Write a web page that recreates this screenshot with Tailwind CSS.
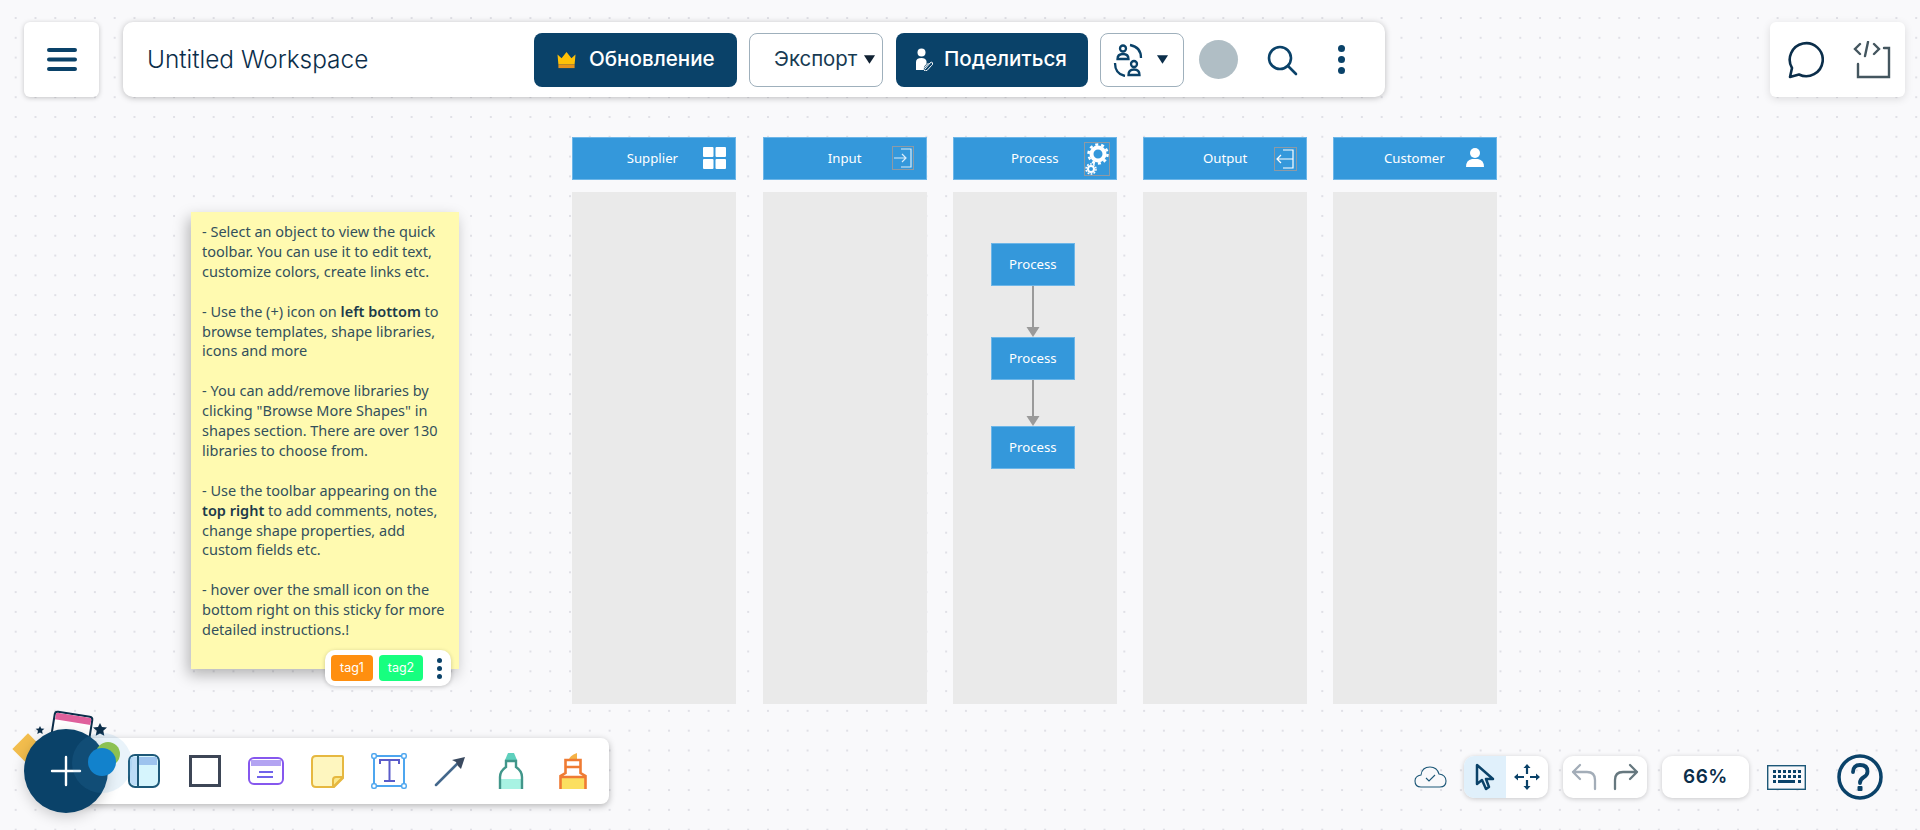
<!DOCTYPE html>
<html lang="ru">

<head>
    <meta charset="UTF-8">
    <meta name="viewport" content="width=device-width, initial-scale=1.0">
    <title>Untitled Workspace</title>
    <script src="https://cdn.jsdelivr.net/npm/@tailwindcss/browser@4"></script>
</head>

<body class="bg-[#f9f9fb]">
    <div class="relative w-[1920px] h-[830px] overflow-hidden pt-[22px] font-['Inter',sans-serif] bg-[#f9f9fb] bg-[radial-gradient(circle,#e0e0e6_1px,transparent_1.3px)] bg-[size:19.8px_19.8px] bg-[position:5.8px_8.1px]">

        <!-- top bar -->
        <div class="flex h-[75px] pl-[24px] pr-[15px]">
            <div class="w-[75px] h-[75px] bg-white rounded-[6px] shadow-[0_1px_5px_rgba(0,0,0,0.22)] flex items-center justify-center">
                <svg width="30" height="27" viewBox="0 0 30 27" fill="none" stroke="#0a4269" stroke-width="4" stroke-linecap="round"><path d="M2 4h26M2 13.500h26M2 23h26" /></svg>
            </div>
            <div class="ml-[24px] w-[1262px] h-[75px] bg-white rounded-[10px] shadow-[0_1px_6px_rgba(0,0,0,0.25)] flex items-center pl-[24px]">
                <div class="w-[387px] text-[24.400px] font-light text-[#0b2e4a] whitespace-nowrap">Untitled Workspace</div>
                <div class="w-[203px] h-[54px] rounded-[8px] bg-[#0a4269] flex items-center text-white text-[20.600px] font-medium pl-[22px]">
                    <svg width="21" height="18" viewBox="0 0 22 20" class="mr-[12px]">
                        <path d="M1 4l4.500 4L11 1l5.500 7L21 4l-1 11H2z" fill="#ffc107" />
                        <rect x="2" y="15" width="18" height="4" fill="#e8921a" />
                    </svg>
                    Обновление
                </div>
                <div class="ml-[12px] w-[134px] h-[54px] rounded-[8px] border border-[#9fb0bc] bg-white flex items-center text-[20.400px] text-[#173a52] pl-[24px]">
                    Экспорт
                    <svg width="13" height="9" viewBox="0 0 14 9" class="ml-[6px]"><path d="M1 0h12L7 9z" fill="#123" /></svg>
                </div>
                <div class="ml-[13px] w-[192px] h-[54px] rounded-[8px] bg-[#0a4269] flex items-center text-white text-[20.600px] font-medium pl-[19px]">
                    <svg width="18" height="23" viewBox="0 0 18 23" class="mr-[11px]" fill="#fff">
                        <circle cx="6.500" cy="4.500" r="4" />
                        <path d="M1 22v-8q0-4 5.500-4 4 0 5 3v3q-3 2-3 6z" />
                        <path d="M10 21l5-6q2-2 2.500 0t-1 2.500l-4.500 5q-2 1-3-.5t.5-2.500l4-4.500" fill="none" stroke="#fff" stroke-width="1" />
                    </svg>
                    Поделиться
                </div>
                <div class="ml-[12px] w-[84px] h-[54px] rounded-[8px] border border-[#9fb0bc] bg-white flex items-center pl-[12px]">
                    <svg width="30" height="34" viewBox="0 0 30 34" fill="none" stroke="#0a4269" stroke-width="2.300">
                        <circle cx="10" cy="5.500" r="3" />
                        <path d="M4.500 16q0-5 5.500-5t5.500 5z" />
                        <circle cx="21" cy="21" r="3" />
                        <path d="M15.500 32q0-5.500 5.500-5.500t5.500 5.500z" />
                        <path d="M17 2q11 2 11 13M2 20q0 11 10 13" />
                    </svg>
                    <svg width="13" height="9" viewBox="0 0 14 9" class="ml-[13px]"><path d="M1 0h12L7 9z" fill="#0b2e4a" /></svg>
                </div>
                <div class="ml-[15px] w-[39px] h-[39px] rounded-full bg-[#b0bec5]"></div>
                <svg width="32" height="32" viewBox="0 0 32 32" class="ml-[28px]" fill="none" stroke="#0a4269" stroke-width="2.600" stroke-linecap="round">
                    <circle cx="14" cy="14" r="11" />
                    <path d="M22 22l8 8" />
                </svg>
                <div class="ml-[40px] flex flex-col gap-[4px]">
                    <div class="w-[7px] h-[7px] rounded-full bg-[#0a4269]"></div>
                    <div class="w-[7px] h-[7px] rounded-full bg-[#0a4269]"></div>
                    <div class="w-[7px] h-[7px] rounded-full bg-[#0a4269]"></div>
                </div>
            </div>
            <div class="ml-auto w-[135px] h-[75px] bg-white rounded-[6px] shadow-[0_2px_8px_rgba(0,0,0,0.12)] flex items-center pl-[16px]">
                <svg width="38" height="38" viewBox="0 0 38 38" fill="none" stroke="#0b2e4a" stroke-width="2.600" stroke-linejoin="round">
                    <path d="M4 36l2-9A16.500 16.500 0 1 1 13 33.500z" />
                </svg>
                <svg width="38" height="38" viewBox="0 0 38 38" class="ml-[29px]" fill="none" stroke="#44565f" stroke-width="2.400" stroke-linecap="round">
                    <path d="M7 3l-5 5 5 5M21 3l5 5-5 5M15 1l-3 14" />
                    <path d="M31 7h5v29H5V23" />
                </svg>
            </div>
        </div>

        <!-- canvas -->
        <div class="flex items-start h-[607px] pt-[40px] pl-[191px]">
            <div class="relative w-[268px] h-[457px] mt-[75px] bg-[#fffab0] shadow-[-3px_6px_14px_rgba(0,0,0,0.28)] pt-[10px] pl-[11px] font-['Noto_Sans',sans-serif] text-[14.500px] leading-[19.900px] text-[#33505c] whitespace-nowrap">
                <div>- Select an object to view the quick</div>
                <div>toolbar. You can use it to edit text,</div>
                <div>customize colors, create links etc.</div>
                <div class="h-[19.900px]"></div>
                <div>- Use the (+) icon on <b class="font-semibold text-[#1c3a4a]">left bottom</b> to</div>
                <div>browse templates, shape libraries,</div>
                <div>icons and more</div>
                <div class="h-[19.900px]"></div>
                <div>- You can add/remove libraries by</div>
                <div>clicking "Browse More Shapes" in</div>
                <div>shapes section. There are over 130</div>
                <div>libraries to choose from.</div>
                <div class="h-[19.900px]"></div>
                <div>- Use the toolbar appearing on the</div>
                <div><b class="font-semibold text-[#1c3a4a]">top right</b> to add comments, notes,</div>
                <div>change shape properties, add</div>
                <div>custom fields etc.</div>
                <div class="h-[19.900px]"></div>
                <div>- hover over the small icon on the</div>
                <div>bottom right on this sticky for more</div>
                <div>detailed instructions.!</div>

                <div class="absolute left-[134px] top-[438px] w-[126px] h-[36px] bg-white rounded-[10px] shadow-[0_1px_4px_rgba(0,0,0,0.2)] flex items-center pl-[6px] font-['Inter',sans-serif] text-[12.500px] text-white">
                    <div class="w-[42px] h-[26px] rounded-[4px] bg-[#ff8f0f] flex items-center justify-center">tag1</div>
                    <div class="ml-[6px] w-[44px] h-[26px] rounded-[4px] bg-[#17ff7f] flex items-center justify-center">tag2</div>
                    <div class="ml-[14px] flex flex-col gap-[3px]">
                        <div class="w-[5px] h-[5px] rounded-full bg-[#0a4269]"></div>
                        <div class="w-[5px] h-[5px] rounded-full bg-[#0a4269]"></div>
                        <div class="w-[5px] h-[5px] rounded-full bg-[#0a4269]"></div>
                    </div>
                </div>
            </div>

            <div class="ml-[113.400px] flex gap-[26.250px] font-['Noto_Sans',sans-serif] text-[13.200px] text-white">
                <div class="w-[164px]">
                    <div class="relative h-[43px] bg-[#3498db] border border-[#6db6e8] flex items-center justify-center pr-[4px]">
                        Supplier
                        <svg width="23" height="22" viewBox="0 0 23 22" class="absolute left-[130px] top-[9px]" fill="#fff">
                            <rect x="0" y="0" width="10.500" height="10" rx="1" />
                            <rect x="12.500" y="0" width="10.500" height="10" rx="1" />
                            <rect x="0" y="12" width="10.500" height="10" rx="1" />
                            <rect x="12.500" y="12" width="10.500" height="10" rx="1" />
                        </svg>
                    </div>
                    <div class="mt-[12px] h-[512px] bg-[#eaeaea]"></div>
                </div>
                <div class="w-[164px]">
                    <div class="relative h-[43px] bg-[#3498db] border border-[#6db6e8] flex items-center justify-center">
                        Input
                        <svg width="22" height="24" viewBox="0 0 22 24" class="absolute left-[128px] top-[8px]" fill="none">
                            <rect x="0.500" y="0.500" width="21" height="23" stroke="#8d9aa5" />
                            <path d="M9 3h10v18H9M2 12h12M10 8l4 4-4 4" stroke="#d8ecfa" stroke-width="1.200" />
                        </svg>
                    </div>
                    <div class="mt-[12px] h-[512px] bg-[#eaeaea]"></div>
                </div>
                <div class="w-[164px]">
                    <div class="relative h-[43px] bg-[#3498db] border border-[#6db6e8] flex items-center justify-center">
                        Process
                        <svg width="26" height="34" viewBox="0 0 26 34" class="absolute left-[130px] top-[4px]" fill="none">
                            <rect x="0.500" y="0.500" width="25" height="33" stroke="#8d9aa5" />
                            <circle cx="14" cy="12" r="6.500" stroke="#fff" stroke-width="4" />
                            <circle cx="14" cy="12" r="9.500" stroke="#fff" stroke-width="2.500" stroke-dasharray="3 2.960" />
                            <circle cx="7" cy="27" r="3" stroke="#fff" stroke-width="2" />
                            <circle cx="7" cy="27" r="5" stroke="#fff" stroke-width="1.500" stroke-dasharray="1.800 1.340" />
                        </svg>
                    </div>
                    <div class="mt-[12px] h-[512px] bg-[#eaeaea] pt-[51px] pl-[38px] flex flex-col items-start">
                        <div class="w-[84px] h-[43px] bg-[#3498db] border border-[#6db6e8] flex items-center justify-center">Process</div>
                        <svg width="14" height="51" viewBox="0 0 14 51" class="ml-[35px]" fill="#9a9a9a">
                            <rect x="6" y="0" width="2" height="42" />
                            <path d="M0.500 41h13L7 51z" />
                        </svg>
                        <div class="w-[84px] h-[43px] bg-[#3498db] border border-[#6db6e8] flex items-center justify-center">Process</div>
                        <svg width="14" height="46" viewBox="0 0 14 46" class="ml-[35px]" fill="#9a9a9a">
                            <rect x="6" y="0" width="2" height="38" />
                            <path d="M0.500 36h13L7 46z" />
                        </svg>
                        <div class="w-[84px] h-[43px] bg-[#3498db] border border-[#6db6e8] flex items-center justify-center">Process</div>
                    </div>
                </div>
                <div class="w-[164px]">
                    <div class="relative h-[43px] bg-[#3498db] border border-[#6db6e8] flex items-center justify-center">
                        Output
                        <svg width="23" height="24" viewBox="0 0 23 24" class="absolute left-[130px] top-[9px]" fill="none">
                            <rect x="0.500" y="0.500" width="22" height="23" stroke="#8d9aa5" />
                            <path d="M9 3h10v18H9M19 12H3M7 8l-4 4 4 4" stroke="#fff" stroke-width="1.200" />
                        </svg>
                    </div>
                    <div class="mt-[12px] h-[512px] bg-[#eaeaea]"></div>
                </div>
                <div class="w-[164px]">
                    <div class="relative h-[43px] bg-[#3498db] border border-[#6db6e8] flex items-center justify-center pr-[2px]">
                        Customer
                        <svg width="18" height="19" viewBox="0 0 18 19" class="absolute left-[132px] top-[10px]" fill="#fff">
                            <circle cx="9" cy="5" r="5" />
                            <path d="M0 19q0-7 6-8h6q6 1 6 8z" />
                        </svg>
                    </div>
                    <div class="mt-[12px] h-[512px] bg-[#eaeaea]"></div>
                </div>
            </div>
        </div>

        <!-- bottom bar -->
        <div class="flex items-start justify-between mt-[34px] pl-[24px]">
            <div class="relative ml-[42px] w-[543px] h-[66px] bg-white rounded-r-[8px] shadow-[0_2px_7px_rgba(0,0,0,0.28)] flex items-center pl-[47px]">
                <div class="w-[61.300px] flex justify-center">
                    <svg width="32" height="34" viewBox="0 0 32 34">
                        <rect x="1" y="1" width="30" height="32" rx="6" fill="#d6f5fd" stroke="#1d5878" stroke-width="2" />
                        <path d="M3 3h7v28H7q-5 0-5-5V7z" fill="#bcdcf7" />
                        <path d="M10 3h19v8H10z" fill="#9dc3ee" />
                        <path d="M10 1v32" stroke="#1d5878" stroke-width="2" />
                    </svg>
                </div>
                <div class="w-[61.300px] flex justify-center">
                    <div class="w-[32px] h-[32px] border-[3px] border-[#3d4656] bg-white"></div>
                </div>
                <div class="w-[61.300px] flex justify-center">
                    <svg width="36" height="28" viewBox="0 0 36 28" fill="none">
                        <rect x="1" y="1" width="34" height="26" rx="5" stroke="#8657ee" stroke-width="2" />
                        <path d="M3 3h30v6H3z" fill="#b3a4f2" />
                        <path d="M11 15h14M9 20h16" stroke="#7063ea" stroke-width="2" />
                    </svg>
                </div>
                <div class="w-[61.300px] flex justify-center">
                    <svg width="33" height="33" viewBox="0 0 33 33">
                        <path d="M5 1h26q1 0 1 1v21l-9 9H5q-4 0-4-4V5q0-4 4-4z" fill="#fef6bf" stroke="#e6b840" stroke-width="2" />
                        <path d="M32 22h-7q-3 0-3 3v7z" fill="#fbe88a" stroke="#e6b840" stroke-width="2" />
                    </svg>
                </div>
                <div class="w-[61.300px] flex justify-center">
                    <svg width="36" height="36" viewBox="0 0 36 36" fill="none">
                        <rect x="3" y="3" width="30" height="30" stroke="#4da6ef" stroke-width="2" />
                        <g fill="#fff" stroke="#4da6ef" stroke-width="1.500">
                            <rect x="0.800" y="0.800" width="4.500" height="4.500" rx="1.500" />
                            <rect x="30.700" y="0.800" width="4.500" height="4.500" rx="1.500" />
                            <rect x="0.800" y="30.700" width="4.500" height="4.500" rx="1.500" />
                            <rect x="30.700" y="30.700" width="4.500" height="4.500" rx="1.500" />
                        </g>
                        <path d="M9 11V7h19v4M18.500 7v21M13 28h11" stroke="#5a5cc9" stroke-width="2" />
                    </svg>
                </div>
                <div class="w-[61.300px] flex justify-center">
                    <svg width="32" height="32" viewBox="0 0 32 32" fill="none">
                        <path d="M2 30L24 8" stroke="#44688c" stroke-width="2.500" stroke-linecap="round" />
                        <path d="M31 2L18 5l4 2 2 4 3 3z" fill="#3a4a60" />
                    </svg>
                </div>
                <div class="w-[61.300px] flex justify-center">
                    <svg width="26" height="36" viewBox="0 0 26 36">
                        <path d="M10 0h6l3 7H7z" fill="#5fd0bd" />
                        <path d="M3 24q0-6 5-10V7h10v7q5 4 5 10v12H3z" fill="#fff" />
                        <path d="M2 26h22v10H2z" fill="#a8f3e3" />
                        <path d="M2 36V24q0-6 6-10V8h10v6q6 4 6 10v12" fill="none" stroke="#41968a" stroke-width="2.400" />
                    </svg>
                </div>
                <div class="w-[61.300px] flex justify-center">
                    <svg width="28" height="36" viewBox="0 0 28 36">
                        <path d="M10 7q0-4 8-7v7z" fill="#f4b247" />
                        <path d="M7 7h14v12H7z" fill="#fff" />
                        <path d="M1 24h26v12H1z" fill="#fbdf60" />
                        <path d="M1.500 36V23l5-3V7h15v13l5 3v13M1.500 24h25M7 14h14" fill="none" stroke="#ef7b33" stroke-width="2.600" />
                    </svg>
                </div>

                <!-- plus button with its decorations -->
                <div class="absolute left-[-55px] top-[-6px] w-[34px] h-[34px] rotate-[45deg] scale-[0.65] bg-[#f2bd4d]"></div>
                <div class="absolute left-[-15px] top-[-25px] w-[40px] h-[40px] rotate-[9deg] bg-white border-[2px] border-[#0b2e4a] rounded-[4px] overflow-hidden">
                    <div class="h-[7px] bg-[#e0619c]"></div>
                </div>
                <svg width="10" height="10" viewBox="0 0 16 15" class="absolute left-[-31px] top-[-13px]" fill="#0b2e4a"><path d="M8 1l2 4 5 .6-3.700 3.200 1 5L8 11.500l-4.300 2.300 1-5L1 5.600 6 5z" /></svg>
                <svg width="16" height="15" viewBox="0 0 16 15" class="absolute left-[26px] top-[-16px]" fill="#0b2e4a"><path d="M8 1l2 4 5 .6-3.700 3.200 1 5L8 11.500l-4.300 2.300 1-5L1 5.600 6 5z" /></svg>
                <div class="absolute left-[-42px] top-[-9px] w-[84px] h-[84px] rounded-full bg-[#0a4269] flex items-center justify-center shadow-[0_4px_14px_rgba(0,0,0,0.18)]">
                    <svg width="32" height="32" viewBox="0 0 32 32" stroke="#fff" stroke-width="2.400" stroke-linecap="round"><path d="M16 2v28M2 16h28" /></svg>
                </div>
                <div class="absolute left-[6px] top-[-5px] w-[60px] h-[60px] rounded-full bg-[#4a9ad4]/12"></div>
                <div class="absolute left-[30px] top-[4px] w-[24px] h-[24px] rounded-full bg-[#8cc152]"></div>
                <div class="absolute left-[22px] top-[10px] w-[28px] h-[28px] rounded-full bg-[#1282cc]"></div>
            </div>

            <div class="flex items-center h-[42px] mt-[18px] pr-[37px]">
                <svg width="33" height="22" viewBox="0 0 33 22" fill="none" stroke="#1d5878" stroke-width="1.100">
                    <path d="M7 21q-6 0-6-6 0-5 6-6 1-8 9-8 7 0 9 7 7 1 7 7 0 6-6 6z" />
                    <path d="M12 12l3 3 6-6" />
                </svg>
                <div class="ml-[17px] w-[84px] h-[42px] bg-white rounded-[10px] shadow-[0_1px_5px_rgba(0,0,0,0.2)] flex overflow-hidden">
                    <div class="w-[42px] h-[42px] bg-[#e0f0fb] flex items-center justify-center">
                        <svg width="20" height="28" viewBox="0 0 20 28" fill="none" stroke="#0a4269" stroke-width="2.500" stroke-linejoin="round"><path d="M2 2v19l5-4 4 9 3-2-3-8h7z" /></svg>
                    </div>
                    <div class="w-[42px] h-[42px] flex items-center justify-center">
                        <svg width="28" height="28" viewBox="0 0 28 28" fill="none" stroke="#0a4269" stroke-width="2.200">
                            <path d="M14 4v7M14 17v7M4 14h7M17 14h7" />
                            <path d="M14 1l3.500 4h-7zM14 27l3.500-4h-7zM1 14l4-3.500v7zM27 14l-4-3.500v7z" fill="#0a4269" stroke="none" />
                        </svg>
                    </div>
                </div>
                <div class="ml-[15px] w-[84px] h-[42px] bg-white rounded-[10px] shadow-[0_1px_5px_rgba(0,0,0,0.2)] flex items-center pl-[8px]">
                    <svg width="26" height="28" viewBox="0 0 26 28" fill="none" stroke="#a3adb8" stroke-width="2.300" stroke-linecap="round" stroke-linejoin="round"><path d="M9 2L2 9l7 7M2 9h14q8 0 8 8v9" /></svg>
                    <svg width="26" height="28" viewBox="0 0 26 28" class="ml-[16px]" fill="none" stroke="#66787f" stroke-width="2.300" stroke-linecap="round" stroke-linejoin="round"><path d="M17 2l7 7-7 7M24 9H10q-8 0-8 8v9" /></svg>
                </div>
                <div class="ml-[15px] w-[87px] h-[42px] bg-white rounded-[10px] shadow-[0_1px_5px_rgba(0,0,0,0.2)] flex items-center justify-center text-[19px] font-semibold tracking-[0.5px] text-[#0b2e4a]">66%</div>
                <svg width="39" height="25" viewBox="0 0 39 25" class="ml-[18px]" fill="#0a4269">
                    <rect x="0.700" y="0.700" width="37.600" height="23.600" fill="none" stroke="#1d5878" stroke-width="1.400" />
                    <path d="M6 5h3v3H6zM11 5h3v3h-3zM16 5h3v3h-3zM21 5h3v3h-3zM26 5h3v3h-3zM31 5h3v3h-3zM6 10h3v3H6zM11 10h3v3h-3zM16 10h3v3h-3zM21 10h3v3h-3zM26 10h3v3h-3zM31 10h3v3h-3zM6 15h3v3H6zM11 15h17v3H11zM31 15h3v3h-3z" />
                </svg>
                <svg width="46" height="46" viewBox="0 0 46 46" class="ml-[31px]" fill="none" stroke="#0a4269">
                    <circle cx="23" cy="23" r="21" stroke-width="3.500" />
                    <path d="M16 18q0-7 7-7 7.500 0 7.500 6.500 0 3.500-3.500 5.500-4 2.200-4 6" stroke-width="3.800" stroke-linecap="round" />
                    <rect x="20.500" y="32" width="5" height="5" rx="1" fill="#0a4269" stroke="none" />
                </svg>
            </div>
        </div>
    </div>
</body>

</html>
